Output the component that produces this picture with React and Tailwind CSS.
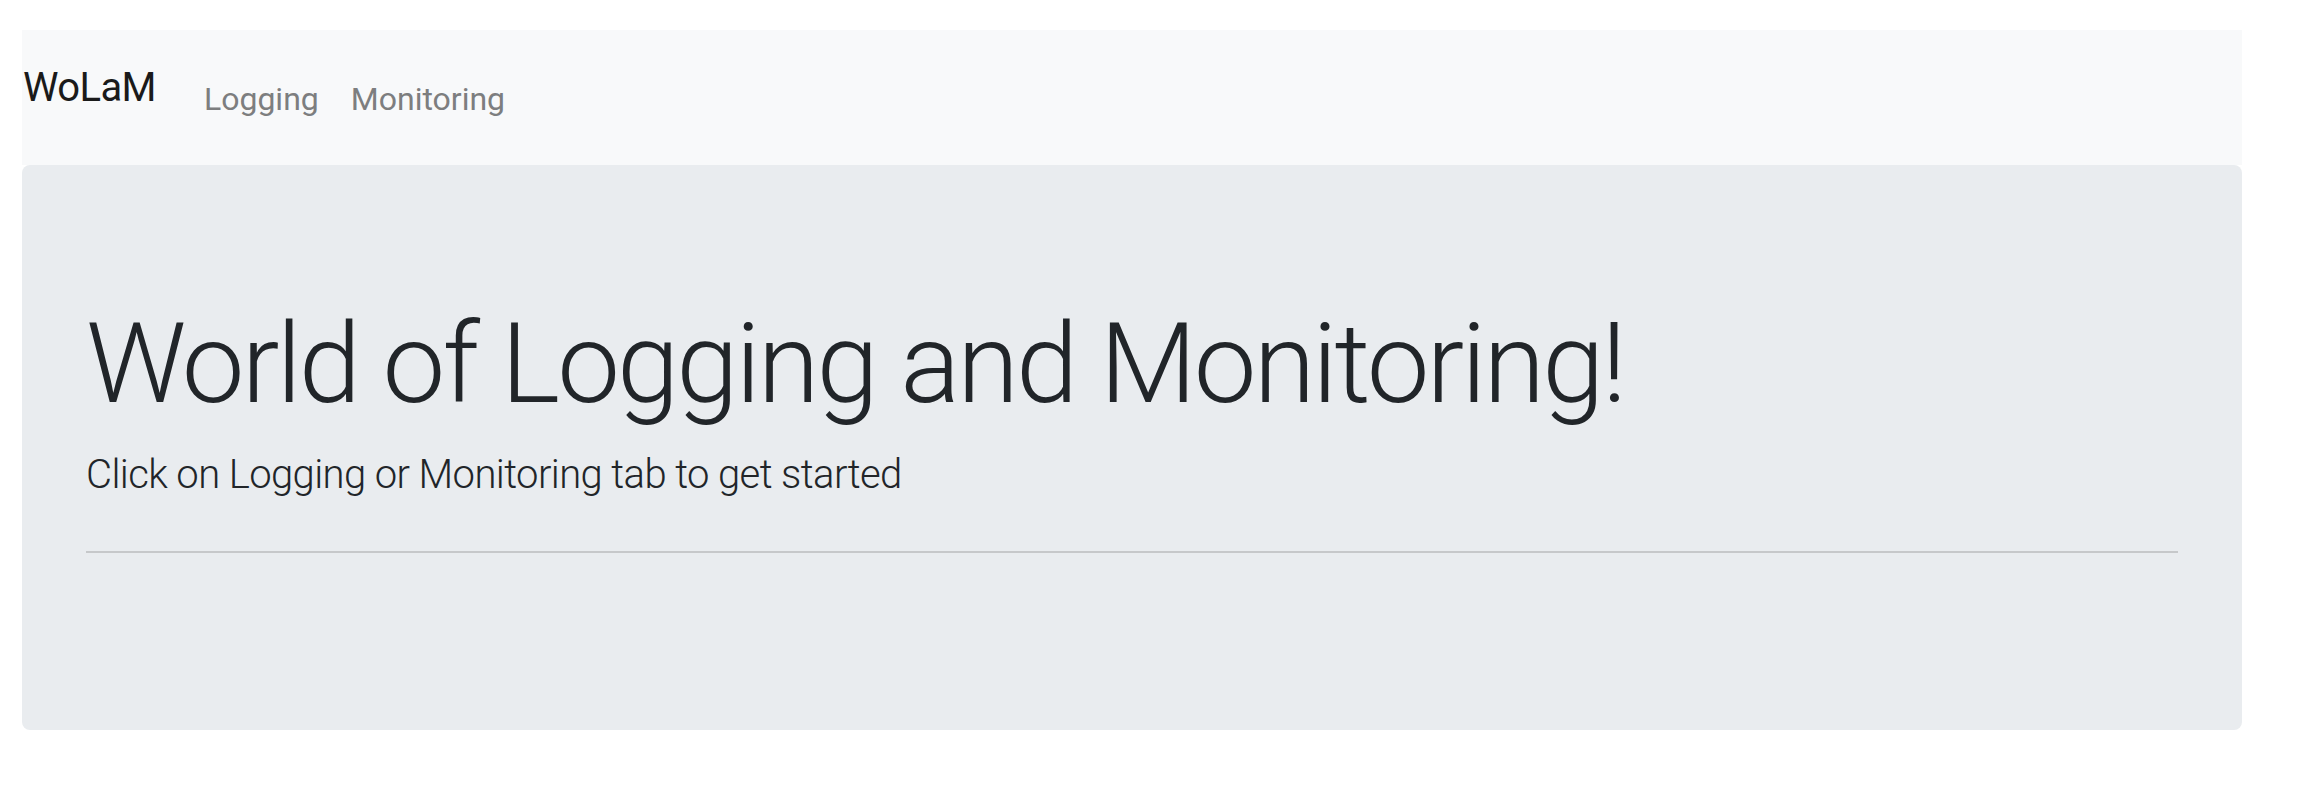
import React from 'react';

const font = { fontFamily: 'Roboto, "Noto Sans", sans-serif' };

function Navbar() {
  return (
    <nav className="flex items-start h-[135px] bg-[#f8f9fa]">
      <a href="#" className="mt-[28px] ml-[1px] mr-[32px] text-[40px] leading-[60px] text-[#1a1a1a] tracking-[-0.6px]">
        WoLaM
      </a>
      <ul className="flex mt-[29px]">
        <li>
          <a href="#" className="block px-[16px] py-[16px] text-[32px] leading-[48px] text-[#7d7e7f]">Logging</a>
        </li>
        <li>
          <a href="#" className="block px-[16px] py-[16px] text-[32px] leading-[48px] text-[#7d7e7f]">Monitoring</a>
        </li>
      </ul>
    </nav>
  );
}

export default function App() {
  return (
    <div className="min-h-screen bg-white" style={font}>
      <div className="ml-[22px] pt-[30px] w-[2220px]">
        <Navbar />

        {/* Jumbotron */}
        <div className="bg-[#e9ecef] rounded-[8px] px-[64px] pt-[132px] pb-[128px] text-[#212529]">
          <h1 className="text-[112px] leading-[1.2] font-light mb-[14px] tracking-[-2.9px]">
            World of Logging and Monitoring!
          </h1>
          <p className="text-[40px] leading-[60px] font-light mb-[46px] tracking-[-0.6px]">
            Click on Logging or Monitoring tab to get started
          </p>
          <hr className="border-0 border-t-2 border-[#c6c8ca] mb-[49px]" />
        </div>
      </div>
    </div>
  );
}
